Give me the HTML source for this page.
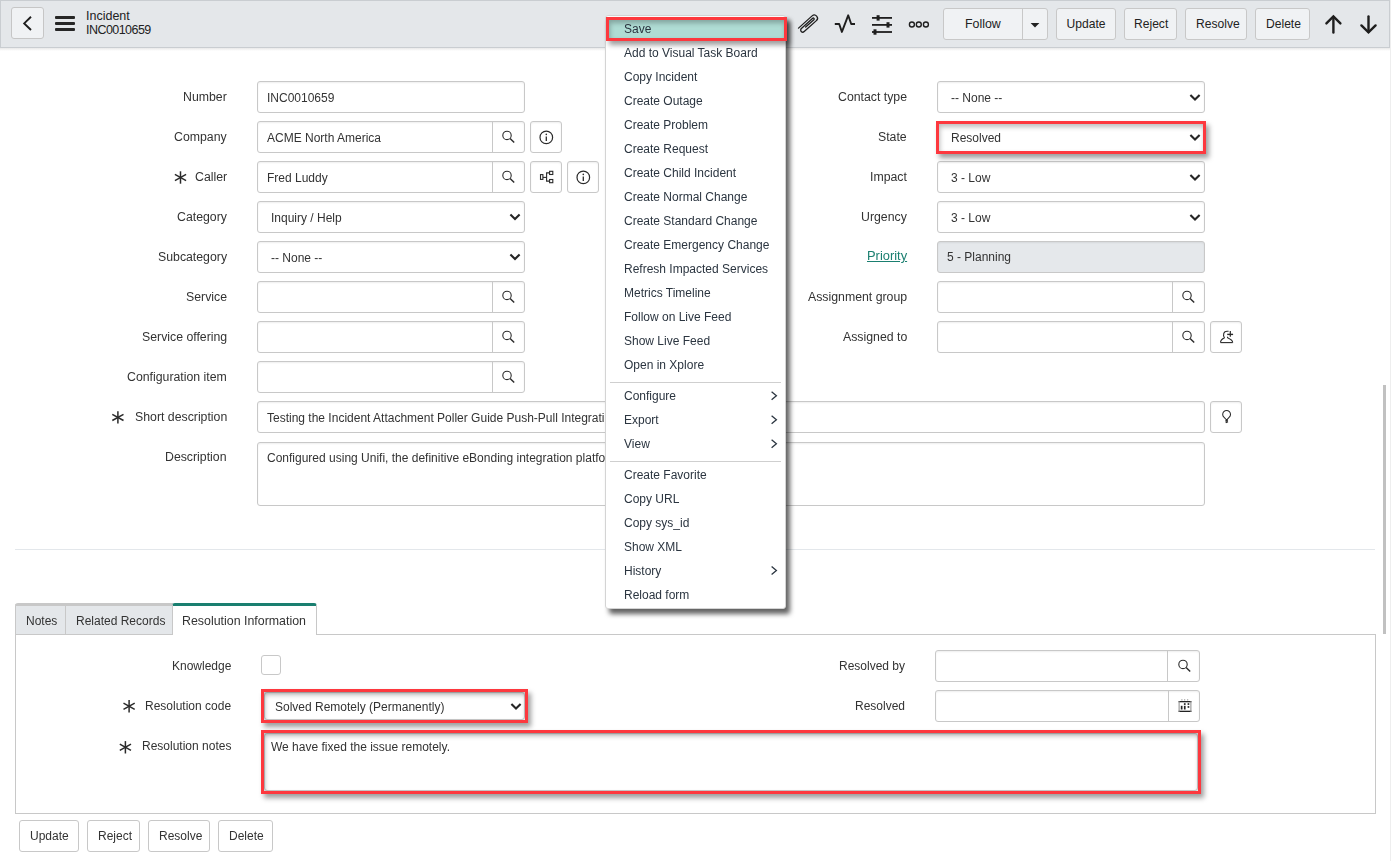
<!DOCTYPE html>
<html><head><meta charset="utf-8"><title>Incident INC0010659</title>
<style>
html,body{margin:0;padding:0;}
body{width:1391px;height:861px;overflow:hidden;position:relative;background:#fff;font-family:"Liberation Sans",sans-serif;font-size:12px;}
.a{position:absolute;display:block;}
.t{position:absolute;white-space:nowrap;line-height:16px;font-size:12px;will-change:transform;}
.t.h{will-change:auto;}
</style></head><body>
<div class="a" style="left:0px;top:0px;width:1390px;height:48px;background:#e4e7ea;border:1px solid #c9cdd1;box-sizing:border-box;"></div>
<div class="a" style="left:0px;top:48px;width:1390px;height:3px;background:linear-gradient(#e9e9e9,#fff);"></div>
<div class="a" style="left:11px;top:7px;width:33px;height:32px;background:#f0f2f4;border:1px solid #c6c6c6;border-radius:3px;box-sizing:border-box;"></div>
<svg class="a" style="left:20px;top:14px;" width="16" height="20" viewBox="20 14 16 20"><polyline points="31,16.8 24.2,23.4 31,30" fill="none" stroke="#1e1e1e" stroke-width="1.9"/></svg>
<div class="a" style="left:55px;top:16px;width:20px;height:3px;background:#262626;border-radius:1px;"></div>
<div class="a" style="left:55px;top:22px;width:20px;height:3px;background:#262626;border-radius:1px;"></div>
<div class="a" style="left:55px;top:28px;width:20px;height:3px;background:#262626;border-radius:1px;"></div>
<div class="t h" style="left:86px;top:8.0px;color:#222;font-size:12.5px;">Incident</div>
<div class="t h" style="left:86px;top:21.6px;color:#222;font-size:12.5px;letter-spacing:-0.55px;">INC0010659</div>
<svg class="a" style="left:795px;top:10px;" width="26" height="28" viewBox="795 10 26 28"><path transform="translate(814.25,18.25) rotate(-42)" d="M-18.3,-3.2 L0,-3.2 A3.2,3.2 0 0 1 0,3.2 L-16.4,3.2 A2.1,2.1 0 0 1 -16.4,-1.0 L-1.2,-1.0 A0.9,0.9 0 0 1 -1.2,0.8 L-12.3,0.8" fill="none" stroke="#1e1e1e" stroke-width="1.3" stroke-linecap="round"/></svg>
<svg class="a" style="left:832px;top:10px;" width="26" height="28" viewBox="832 10 26 28"><polyline points="834.8,24 839.2,24 841.9,31.9 848.2,15.3 851.2,24 855,24" fill="none" stroke="#1e1e1e" stroke-width="1.9" stroke-linejoin="round"/></svg>
<svg class="a" style="left:868px;top:10px;" width="28" height="28" viewBox="868 10 28 28"><g stroke="#1e1e1e" stroke-width="1.8"><line x1="872" y1="17.9" x2="892" y2="17.9"/><line x1="872" y1="24.9" x2="892" y2="24.9"/><line x1="872" y1="32" x2="892" y2="32"/></g><g fill="#1e1e1e"><rect x="876.6" y="15.2" width="3" height="5.4"/><rect x="886.5" y="22.2" width="3" height="5.4"/><rect x="873.5" y="29.3" width="3" height="5.4"/></g></svg>
<svg class="a" style="left:905px;top:18px;" width="26" height="14" viewBox="905 18 26 14"><g fill="none" stroke="#1e1e1e" stroke-width="1.35"><circle cx="911.9" cy="24.5" r="2.5"/><circle cx="918.8" cy="24.5" r="2.5"/><circle cx="925.9" cy="24.5" r="2.5"/></g></svg>
<div class="a" style="left:943px;top:8px;width:105px;height:32px;background:#f0f2f4;border:1px solid #c8c8c8;border-radius:3px;box-sizing:border-box;"></div>
<div class="a" style="left:1022px;top:9px;width:1px;height:30px;background:#c8c8c8;"></div>
<div class="t h" style="left:965px;top:15.8px;color:#222;font-size:12.4px;">Follow</div>
<svg class="a" style="left:1028px;top:20px;" width="16" height="10" viewBox="1028 20 16 10"><polygon points="1030.6,23 1039.4,23 1035,27.4" fill="#222"/></svg>
<div class="a" style="left:1056px;top:8px;width:60px;height:32px;background:#f0f2f4;border:1px solid #c8c8c8;border-radius:3px;box-sizing:border-box;"></div>
<div class="t h" style="left:1066.5px;top:16.1px;color:#222;font-size:12.1px;">Update</div>
<div class="a" style="left:1124px;top:8px;width:53px;height:32px;background:#f0f2f4;border:1px solid #c8c8c8;border-radius:3px;box-sizing:border-box;"></div>
<div class="t h" style="left:1134px;top:16.1px;color:#222;font-size:12.1px;">Reject</div>
<div class="a" style="left:1185px;top:8px;width:62px;height:32px;background:#f0f2f4;border:1px solid #c8c8c8;border-radius:3px;box-sizing:border-box;"></div>
<div class="t h" style="left:1196px;top:16.1px;color:#222;font-size:12.1px;">Resolve</div>
<div class="a" style="left:1255px;top:8px;width:55px;height:32px;background:#f0f2f4;border:1px solid #c8c8c8;border-radius:3px;box-sizing:border-box;"></div>
<div class="t h" style="left:1266px;top:16.1px;color:#222;font-size:12.1px;">Delete</div>
<svg class="a" style="left:1320px;top:10px;" width="60" height="28" viewBox="1320 10 60 28"><g fill="none" stroke="#1e1e1e" stroke-width="2.4" stroke-linecap="round"><polyline points="1326.4,23.4 1333.4,16.4 1340.4,23.4"/><line x1="1333.4" y1="17" x2="1333.4" y2="32.6"/><polyline points="1361.4,25.4 1368.5,32.4 1375.6,25.4"/><line x1="1368.5" y1="16.4" x2="1368.5" y2="31.8"/></g></svg>
<div class="t" style="right:1164px;top:88.5px;color:#333;font-size:12.3px;">Number</div>
<div class="t" style="right:1164px;top:128.5px;color:#333;font-size:12.3px;">Company</div>
<div class="t" style="right:1164px;top:168.5px;color:#333;font-size:12.3px;">Caller</div>
<div class="t" style="right:1164px;top:208.5px;color:#333;font-size:12.3px;">Category</div>
<div class="t" style="right:1164px;top:248.5px;color:#333;font-size:12.3px;">Subcategory</div>
<div class="t" style="right:1164px;top:288.5px;color:#333;font-size:12.3px;">Service</div>
<div class="t" style="right:1164px;top:328.5px;color:#333;font-size:12.3px;">Service offering</div>
<div class="t" style="right:1164px;top:368.5px;color:#333;font-size:12.3px;">Configuration item</div>
<div class="t" style="right:1164px;top:408.5px;color:#333;font-size:12.3px;">Short description</div>
<div class="t" style="right:1164px;top:448.5px;color:#333;font-size:12.3px;">Description</div>
<div class="a" style="left:257px;top:81px;width:268px;height:32px;background:#fff;border:1px solid #c8c8c8;border-radius:3px;box-sizing:border-box;box-shadow:inset 0 1px 2px rgba(0,0,0,.07);"></div>
<div class="t" style="left:267px;top:90.1px;color:#333;font-size:12px;">INC0010659</div>
<div class="a" style="left:257px;top:121px;width:268px;height:32px;background:#fff;border:1px solid #c8c8c8;border-radius:3px;box-sizing:border-box;box-shadow:inset 0 1px 2px rgba(0,0,0,.07);"></div>
<div class="a" style="left:492px;top:122px;width:1px;height:30px;background:#c8c8c8;"></div>
<svg class="a" style="left:500px;top:129px;" width="17" height="17" viewBox="500 129 17 17"><g fill="none" stroke="#2a2a2a" stroke-width="1.2"><circle cx="507.0" cy="135.4" r="4.2" stroke-width="1.1"/><line x1="510.1" y1="138.5" x2="514.2" y2="142.6" stroke-width="1.4"/></g></svg>
<div class="t" style="left:267px;top:130.1px;color:#333;font-size:12px;">ACME North America</div>
<div class="a" style="left:257px;top:161px;width:268px;height:32px;background:#fff;border:1px solid #c8c8c8;border-radius:3px;box-sizing:border-box;box-shadow:inset 0 1px 2px rgba(0,0,0,.07);"></div>
<div class="a" style="left:492px;top:162px;width:1px;height:30px;background:#c8c8c8;"></div>
<svg class="a" style="left:500px;top:169px;" width="17" height="17" viewBox="500 169 17 17"><g fill="none" stroke="#2a2a2a" stroke-width="1.2"><circle cx="507.0" cy="175.4" r="4.2" stroke-width="1.1"/><line x1="510.1" y1="178.5" x2="514.2" y2="182.6" stroke-width="1.4"/></g></svg>
<div class="t" style="left:267px;top:170.1px;color:#333;font-size:12px;">Fred Luddy</div>
<div class="a" style="left:257px;top:281px;width:268px;height:32px;background:#fff;border:1px solid #c8c8c8;border-radius:3px;box-sizing:border-box;box-shadow:inset 0 1px 2px rgba(0,0,0,.07);"></div>
<div class="a" style="left:492px;top:282px;width:1px;height:30px;background:#c8c8c8;"></div>
<svg class="a" style="left:500px;top:289px;" width="17" height="17" viewBox="500 289 17 17"><g fill="none" stroke="#2a2a2a" stroke-width="1.2"><circle cx="507.0" cy="295.4" r="4.2" stroke-width="1.1"/><line x1="510.1" y1="298.5" x2="514.2" y2="302.59999999999997" stroke-width="1.4"/></g></svg>
<div class="a" style="left:257px;top:321px;width:268px;height:32px;background:#fff;border:1px solid #c8c8c8;border-radius:3px;box-sizing:border-box;box-shadow:inset 0 1px 2px rgba(0,0,0,.07);"></div>
<div class="a" style="left:492px;top:322px;width:1px;height:30px;background:#c8c8c8;"></div>
<svg class="a" style="left:500px;top:329px;" width="17" height="17" viewBox="500 329 17 17"><g fill="none" stroke="#2a2a2a" stroke-width="1.2"><circle cx="507.0" cy="335.4" r="4.2" stroke-width="1.1"/><line x1="510.1" y1="338.5" x2="514.2" y2="342.59999999999997" stroke-width="1.4"/></g></svg>
<div class="a" style="left:257px;top:361px;width:268px;height:32px;background:#fff;border:1px solid #c8c8c8;border-radius:3px;box-sizing:border-box;box-shadow:inset 0 1px 2px rgba(0,0,0,.07);"></div>
<div class="a" style="left:492px;top:362px;width:1px;height:30px;background:#c8c8c8;"></div>
<svg class="a" style="left:500px;top:369px;" width="17" height="17" viewBox="500 369 17 17"><g fill="none" stroke="#2a2a2a" stroke-width="1.2"><circle cx="507.0" cy="375.4" r="4.2" stroke-width="1.1"/><line x1="510.1" y1="378.5" x2="514.2" y2="382.59999999999997" stroke-width="1.4"/></g></svg>
<div class="a" style="left:530px;top:121px;width:32px;height:32px;background:#fff;border:1px solid #c8c8c8;border-radius:3px;box-sizing:border-box;box-shadow:inset 0 1px 2px rgba(0,0,0,.07);"></div>
<svg class="a" style="left:530px;top:121px;" width="32" height="32" viewBox="530 121 32 32"><circle cx="546.3" cy="137.4" r="6.3" fill="none" stroke="#2a2a2a" stroke-width="1.2"/><circle cx="546.3" cy="134.4" r="0.8" fill="#2a2a2a"/><line x1="546.3" y1="136.6" x2="546.3" y2="141.0" stroke="#2a2a2a" stroke-width="1.3"/></svg>
<div class="a" style="left:530px;top:161px;width:32px;height:32px;background:#fff;border:1px solid #c8c8c8;border-radius:3px;box-sizing:border-box;box-shadow:inset 0 1px 2px rgba(0,0,0,.07);"></div>
<svg class="a" style="left:530px;top:161px;" width="32" height="32" viewBox="530 161 32 32"><g fill="none" stroke="#2a2a2a" stroke-width="1.1"><rect x="540.5" y="174.6" width="2.4" height="4.8"/><rect x="549.6" y="171.3" width="3.2" height="3.2"/><rect x="549.6" y="179.5" width="3.2" height="3.2"/><polyline points="543,177.4 546.6,177.4"/><polyline points="549.6,172.9 546.6,172.9 546.6,181.1 549.6,181.1"/></g></svg>
<div class="a" style="left:567px;top:161px;width:32px;height:32px;background:#fff;border:1px solid #c8c8c8;border-radius:3px;box-sizing:border-box;box-shadow:inset 0 1px 2px rgba(0,0,0,.07);"></div>
<svg class="a" style="left:567px;top:161px;" width="32" height="32" viewBox="567 161 32 32"><circle cx="583.3" cy="177.4" r="6.3" fill="none" stroke="#2a2a2a" stroke-width="1.2"/><circle cx="583.3" cy="174.4" r="0.8" fill="#2a2a2a"/><line x1="583.3" y1="176.6" x2="583.3" y2="181.0" stroke="#2a2a2a" stroke-width="1.3"/></svg>
<svg class="a" style="left:172px;top:169px;" width="17" height="17" viewBox="172 169 17 17"><g stroke="#2a2a2a" stroke-width="1.5"><line x1="180.5" y1="171.3" x2="180.5" y2="183.7"/><line x1="174.9" y1="174.4" x2="186.1" y2="180.6"/><line x1="174.9" y1="180.6" x2="186.1" y2="174.4"/></g></svg>
<div class="a" style="left:257px;top:201px;width:268px;height:32px;background:#fff;border:1px solid #c8c8c8;border-radius:3px;box-sizing:border-box;box-shadow:inset 0 1px 2px rgba(0,0,0,.07);"></div>
<div class="t" style="left:271px;top:210.1px;color:#333;font-size:12px;">Inquiry / Help</div>
<svg class="a" style="left:508px;top:211px;" width="14" height="12" viewBox="508 211 14 12"><polyline points="510.4,214.4 515,219 519.6,214.4" fill="none" stroke="#262626" stroke-width="2.1"/></svg>
<div class="a" style="left:257px;top:241px;width:268px;height:32px;background:#fff;border:1px solid #c8c8c8;border-radius:3px;box-sizing:border-box;box-shadow:inset 0 1px 2px rgba(0,0,0,.07);"></div>
<div class="t" style="left:271px;top:250.1px;color:#333;font-size:12px;">-- None --</div>
<svg class="a" style="left:508px;top:251px;" width="14" height="12" viewBox="508 251 14 12"><polyline points="510.4,254.4 515,259 519.6,254.4" fill="none" stroke="#262626" stroke-width="2.1"/></svg>
<div class="a" style="left:257px;top:401px;width:948px;height:32px;background:#fff;border:1px solid #c8c8c8;border-radius:3px;box-sizing:border-box;box-shadow:inset 0 1px 2px rgba(0,0,0,.07);"></div>
<div class="t" style="left:267px;top:410.0px;color:#333;font-size:12px;">Testing the Incident Attachment Poller Guide Push-Pull Integration</div>
<svg class="a" style="left:109px;top:409px;" width="17" height="17" viewBox="109 409 17 17"><g stroke="#2a2a2a" stroke-width="1.5"><line x1="117.9" y1="411.2" x2="117.9" y2="423.59999999999997"/><line x1="112.30000000000001" y1="414.29999999999995" x2="123.5" y2="420.5"/><line x1="112.30000000000001" y1="420.5" x2="123.5" y2="414.29999999999995"/></g></svg>
<div class="a" style="left:1210px;top:401px;width:32px;height:32px;background:#fff;border:1px solid #c8c8c8;border-radius:3px;box-sizing:border-box;box-shadow:inset 0 1px 2px rgba(0,0,0,.07);"></div>
<svg class="a" style="left:1210px;top:401px;" width="32" height="32" viewBox="1210 401 32 32"><g fill="none" stroke="#2a2a2a" stroke-width="1.1"><path d="M1226.6,420 L1223.9,417.2 A3.9,3.9 0 1 1 1229.3,417.2 Z" stroke-width="1.05"/><path d="M1225.4,421.1 L1227.9,419.9 M1225.7,422.7 L1228,421.6" stroke-width="1.3"/></g></svg>
<div class="a" style="left:257px;top:442px;width:948px;height:64px;background:#fff;border:1px solid #c8c8c8;border-radius:3px;box-sizing:border-box;box-shadow:inset 0 1px 2px rgba(0,0,0,.07);"></div>
<div class="t" style="left:267px;top:450.0px;color:#333;font-size:12px;">Configured using Unifi, the definitive eBonding integration platform for ServiceNow</div>
<div class="t" style="right:484px;top:88.5px;color:#333;font-size:12.3px;">Contact type</div>
<div class="t" style="right:484px;top:128.5px;color:#333;font-size:12.3px;">State</div>
<div class="t" style="right:484px;top:168.5px;color:#333;font-size:12.3px;">Impact</div>
<div class="t" style="right:484px;top:208.5px;color:#333;font-size:12.3px;">Urgency</div>
<div class="t" style="right:484px;top:288.5px;color:#333;font-size:12.3px;">Assignment group</div>
<div class="t" style="right:484px;top:328.5px;color:#333;font-size:12.3px;">Assigned to</div>
<div class="t" style="right:484px;top:248.0px;color:#1a7f70;font-size:12.9px;text-decoration:underline;">Priority</div>
<div class="a" style="left:937px;top:81px;width:268px;height:32px;background:#fff;border:1px solid #c8c8c8;border-radius:3px;box-sizing:border-box;box-shadow:inset 0 1px 2px rgba(0,0,0,.07);"></div>
<div class="t" style="left:951px;top:90.0px;color:#333;font-size:12px;">-- None --</div>
<svg class="a" style="left:1188px;top:91px;" width="14" height="13" viewBox="1188 91 14 13"><polyline points="1190.4,94.9 1195,99.5 1199.6,94.9" fill="none" stroke="#262626" stroke-width="2.1"/></svg>
<div class="a" style="left:937px;top:121px;width:268px;height:32px;background:#fff;border:1px solid #c8c8c8;border-radius:3px;box-sizing:border-box;box-shadow:inset 0 1px 2px rgba(0,0,0,.07);"></div>
<div class="t" style="left:951px;top:130.0px;color:#333;font-size:12px;">Resolved</div>
<svg class="a" style="left:1188px;top:131px;" width="14" height="13" viewBox="1188 131 14 13"><polyline points="1190.4,134.9 1195,139.5 1199.6,134.9" fill="none" stroke="#262626" stroke-width="2.1"/></svg>
<div class="a" style="left:937px;top:161px;width:268px;height:32px;background:#fff;border:1px solid #c8c8c8;border-radius:3px;box-sizing:border-box;box-shadow:inset 0 1px 2px rgba(0,0,0,.07);"></div>
<div class="t" style="left:951px;top:170.0px;color:#333;font-size:12px;">3 - Low</div>
<svg class="a" style="left:1188px;top:171px;" width="14" height="13" viewBox="1188 171 14 13"><polyline points="1190.4,174.9 1195,179.5 1199.6,174.9" fill="none" stroke="#262626" stroke-width="2.1"/></svg>
<div class="a" style="left:937px;top:201px;width:268px;height:32px;background:#fff;border:1px solid #c8c8c8;border-radius:3px;box-sizing:border-box;box-shadow:inset 0 1px 2px rgba(0,0,0,.07);"></div>
<div class="t" style="left:951px;top:210.0px;color:#333;font-size:12px;">3 - Low</div>
<svg class="a" style="left:1188px;top:211px;" width="14" height="13" viewBox="1188 211 14 13"><polyline points="1190.4,214.9 1195,219.5 1199.6,214.9" fill="none" stroke="#262626" stroke-width="2.1"/></svg>
<div class="a" style="left:937px;top:241px;width:268px;height:32px;background:#e5e8eb;border:1px solid #c8c8c8;border-radius:3px;box-sizing:border-box;box-shadow:inset 0 1px 2px rgba(0,0,0,.07);"></div>
<div class="t" style="left:947px;top:249.2px;color:#333;font-size:12px;">5 - Planning</div>
<div class="a" style="left:937px;top:281px;width:268px;height:32px;background:#fff;border:1px solid #c8c8c8;border-radius:3px;box-sizing:border-box;box-shadow:inset 0 1px 2px rgba(0,0,0,.07);"></div>
<div class="a" style="left:1172px;top:282px;width:1px;height:30px;background:#c8c8c8;"></div>
<svg class="a" style="left:1180px;top:289px;" width="17" height="17" viewBox="1180 289 17 17"><g fill="none" stroke="#2a2a2a" stroke-width="1.2"><circle cx="1187.0" cy="295.4" r="4.2" stroke-width="1.1"/><line x1="1190.1" y1="298.5" x2="1194.1999999999998" y2="302.59999999999997" stroke-width="1.4"/></g></svg>
<div class="a" style="left:937px;top:321px;width:268px;height:32px;background:#fff;border:1px solid #c8c8c8;border-radius:3px;box-sizing:border-box;box-shadow:inset 0 1px 2px rgba(0,0,0,.07);"></div>
<div class="a" style="left:1172px;top:322px;width:1px;height:30px;background:#c8c8c8;"></div>
<svg class="a" style="left:1180px;top:329px;" width="17" height="17" viewBox="1180 329 17 17"><g fill="none" stroke="#2a2a2a" stroke-width="1.2"><circle cx="1187.0" cy="335.4" r="4.2" stroke-width="1.1"/><line x1="1190.1" y1="338.5" x2="1194.1999999999998" y2="342.59999999999997" stroke-width="1.4"/></g></svg>
<div class="a" style="left:1210px;top:321px;width:32px;height:32px;background:#fff;border:1px solid #c8c8c8;border-radius:3px;box-sizing:border-box;box-shadow:inset 0 1px 2px rgba(0,0,0,.07);"></div>
<svg class="a" style="left:1210px;top:321px;" width="32" height="32" viewBox="1210 321 32 32"><g fill="none" stroke="#2a2a2a" stroke-width="1.1"><path d="M1220.5,342.6 L1232.7,342.6"/><path d="M1224.6,337.8 C1222,339 1220.5,340 1220.5,342.6"/><path d="M1227.6,336.8 C1227.3,337.4 1227.5,337.8 1228,338.1 C1230.5,339.2 1232.7,340.2 1232.7,342.6"/><path d="M1224.6,337.8 C1223.6,336.4 1223.3,334.6 1223.8,333.2 C1224.3,331.8 1225.6,331.3 1227,331.3 L1228.6,331.3"/><line x1="1227.2" y1="334.4" x2="1233.1" y2="334.4" stroke-width="1.4"/><line x1="1230.3" y1="331.1" x2="1230.3" y2="336.7" stroke-width="1.2"/></g></svg>
<div class="a" style="left:936px;top:121px;width:270px;height:33px;border:3px solid #fd383e;box-sizing:border-box;box-shadow:3px 4px 5px rgba(0,0,0,.38), inset 1px 3px 5px rgba(0,0,0,.26);"></div>
<div class="a" style="left:15px;top:549px;width:1360px;height:1px;background:#e3e7eb;"></div>
<div class="a" style="left:15px;top:603px;width:158px;height:31px;background:#e4e7ea;border-top:3px solid #c8c8c8;border-left:1px solid #c8c8c8;box-sizing:border-box;border-radius:3px 0 0 0;"></div>
<div class="a" style="left:65px;top:606px;width:1px;height:28px;background:#c8c8c8;"></div>
<div class="a" style="left:172px;top:606px;width:1px;height:28px;background:#c8c8c8;"></div>
<div class="a" style="left:172px;top:603px;width:145px;height:32px;background:#fff;border-top:3px solid #1a7f70;border-right:1px solid #c8c8c8;border-left:1px solid #c8c8c8;box-sizing:border-box;border-radius:3px 3px 0 0;"></div>
<div class="t" style="left:25.5px;top:613.1px;color:#333;font-size:12px;">Notes</div>
<div class="t" style="left:75.5px;top:613.1px;color:#333;font-size:12px;">Related Records</div>
<div class="t" style="left:182px;top:612.7px;color:#333;font-size:12.4px;">Resolution Information</div>
<div class="a" style="left:15px;top:634px;width:1361px;height:180px;border:1px solid #c8c8c8;box-sizing:border-box;background:#fff;"></div>
<div class="a" style="left:173px;top:634px;width:143px;height:1px;background:#fff;"></div>
<div class="t" style="right:1160px;top:657.8px;color:#333;font-size:12px;">Knowledge</div>
<div class="a" style="left:261px;top:655px;width:20px;height:20px;border:1px solid #c8c8c8;border-radius:3px;box-sizing:border-box;background:#fff;"></div>
<div class="t" style="right:1160px;top:697.5px;color:#333;font-size:12px;">Resolution code</div>
<svg class="a" style="left:121px;top:698px;" width="17" height="17" viewBox="121 698 17 17"><g stroke="#2a2a2a" stroke-width="1.5"><line x1="129.1" y1="700.0999999999999" x2="129.1" y2="712.5"/><line x1="123.5" y1="703.1999999999999" x2="134.7" y2="709.4"/><line x1="123.5" y1="709.4" x2="134.7" y2="703.1999999999999"/></g></svg>
<div class="t" style="right:1160px;top:737.6px;color:#333;font-size:12px;">Resolution notes</div>
<svg class="a" style="left:117px;top:739px;" width="17" height="17" viewBox="117 739 17 17"><g stroke="#2a2a2a" stroke-width="1.5"><line x1="125.4" y1="741.0999999999999" x2="125.4" y2="753.5"/><line x1="119.80000000000001" y1="744.1999999999999" x2="131.0" y2="750.4"/><line x1="119.80000000000001" y1="750.4" x2="131.0" y2="744.1999999999999"/></g></svg>
<div class="a" style="left:264px;top:692px;width:261px;height:28px;background:#fff;border:1px solid #c8c8c8;border-radius:3px;box-sizing:border-box;box-shadow:inset 0 1px 2px rgba(0,0,0,.07);"></div>
<div class="t" style="left:275px;top:698.8px;color:#333;font-size:12px;">Solved Remotely (Permanently)</div>
<svg class="a" style="left:509px;top:700px;" width="14" height="13" viewBox="509 700 14 13"><polyline points="511.4,703.9 516,708.5 520.6,703.9" fill="none" stroke="#262626" stroke-width="2.1"/></svg>
<div class="a" style="left:261px;top:689px;width:267px;height:34px;border:3px solid #fd383e;box-sizing:border-box;box-shadow:3px 4px 5px rgba(0,0,0,.38), inset 1px 3px 5px rgba(0,0,0,.26);"></div>
<div class="a" style="left:264px;top:733px;width:934px;height:58px;background:#fff;border:1px solid #c8c8c8;border-radius:3px;box-sizing:border-box;box-shadow:inset 0 1px 2px rgba(0,0,0,.07);"></div>
<div class="t" style="left:271px;top:739.4px;color:#333;font-size:12px;">We have fixed the issue remotely.</div>
<div class="a" style="left:261px;top:730px;width:940px;height:64px;border:3px solid #fd383e;box-sizing:border-box;box-shadow:3px 4px 5px rgba(0,0,0,.38), inset 1px 3px 5px rgba(0,0,0,.26);"></div>
<div class="t" style="right:486px;top:658.0px;color:#333;font-size:12px;">Resolved by</div>
<div class="a" style="left:935px;top:650px;width:265px;height:32px;background:#fff;border:1px solid #c8c8c8;border-radius:3px;box-sizing:border-box;box-shadow:inset 0 1px 2px rgba(0,0,0,.07);"></div>
<div class="a" style="left:1167px;top:651px;width:1px;height:30px;background:#c8c8c8;"></div>
<svg class="a" style="left:1176px;top:658px;" width="17" height="17" viewBox="1176 658 17 17"><g fill="none" stroke="#2a2a2a" stroke-width="1.2"><circle cx="1183.0" cy="664.4" r="4.2" stroke-width="1.1"/><line x1="1186.1" y1="667.5" x2="1190.1999999999998" y2="671.6" stroke-width="1.4"/></g></svg>
<div class="t" style="right:486px;top:697.6px;color:#333;font-size:12px;">Resolved</div>
<div class="a" style="left:935px;top:690px;width:265px;height:32px;background:#fff;border:1px solid #c8c8c8;border-radius:3px;box-sizing:border-box;box-shadow:inset 0 1px 2px rgba(0,0,0,.07);"></div>
<div class="a" style="left:1168px;top:691px;width:1px;height:30px;background:#c8c8c8;"></div>
<svg class="a" style="left:1176px;top:696px;" width="18" height="18" viewBox="1176 696 18 18"><g fill="#222"><rect x="1178.6" y="701" width="12.8" height="1.3"/><rect x="1178.6" y="710.7" width="12.8" height="1.3"/><rect x="1178.6" y="701" width="1" height="11" fill="#8a8a8a"/><rect x="1190.4" y="701" width="1" height="11" fill="#8a8a8a"/><rect x="1181.4" y="699" width="1" height="1.6" fill="#aaa"/><rect x="1184.2" y="699" width="1" height="1.6" fill="#aaa"/><rect x="1187.2" y="699" width="1" height="1.6" fill="#aaa"/><rect x="1183.9" y="703.2" width="1.7" height="1.7"/><rect x="1187.6" y="703.2" width="1.7" height="1.7"/><rect x="1187.6" y="706.1" width="1.7" height="1.7"/><rect x="1180.8" y="705.8" width="1.7" height="3.7"/><rect x="1183.9" y="705.8" width="1.7" height="3.7"/></g></svg>
<div class="a" style="left:19px;top:820px;width:60px;height:32px;background:#fff;border:1px solid #c8c8c8;border-radius:3px;box-sizing:border-box;"></div>
<div class="t" style="left:29.5px;top:828.1px;color:#333;font-size:12px;">Update</div>
<div class="a" style="left:87px;top:820px;width:53px;height:32px;background:#fff;border:1px solid #c8c8c8;border-radius:3px;box-sizing:border-box;"></div>
<div class="t" style="left:97.5px;top:828.1px;color:#333;font-size:12px;">Reject</div>
<div class="a" style="left:148px;top:820px;width:62px;height:32px;background:#fff;border:1px solid #c8c8c8;border-radius:3px;box-sizing:border-box;"></div>
<div class="t" style="left:158.5px;top:828.1px;color:#333;font-size:12px;">Resolve</div>
<div class="a" style="left:218px;top:820px;width:55px;height:32px;background:#fff;border:1px solid #c8c8c8;border-radius:3px;box-sizing:border-box;"></div>
<div class="t" style="left:228.5px;top:828.1px;color:#333;font-size:12px;">Delete</div>
<div class="a" style="left:1383px;top:385px;width:3px;height:249px;background:#c1c1c1;"></div>
<div class="a" style="left:1390px;top:0px;width:1px;height:861px;background:#eeeeee;"></div>
<div class="a" style="left:605px;top:15px;width:181px;height:594px;background:#fff;border:1px solid #d4d4d4;box-sizing:border-box;border-radius:3px;box-shadow:4px 5px 5px rgba(0,0,0,.62);"></div>
<div class="a" style="left:606px;top:17px;width:181px;height:24px;background:#afdcd4;"></div>
<div class="t h" style="left:624px;top:20.5px;color:#2b3540;font-size:12px;">Save</div>
<div class="t h" style="left:624px;top:44.5px;color:#2b3540;font-size:12px;">Add to Visual Task Board</div>
<div class="t h" style="left:624px;top:68.5px;color:#2b3540;font-size:12px;">Copy Incident</div>
<div class="t h" style="left:624px;top:92.5px;color:#2b3540;font-size:12px;">Create Outage</div>
<div class="t h" style="left:624px;top:116.5px;color:#2b3540;font-size:12px;">Create Problem</div>
<div class="t h" style="left:624px;top:140.5px;color:#2b3540;font-size:12px;">Create Request</div>
<div class="t h" style="left:624px;top:164.5px;color:#2b3540;font-size:12px;">Create Child Incident</div>
<div class="t h" style="left:624px;top:188.5px;color:#2b3540;font-size:12px;">Create Normal Change</div>
<div class="t h" style="left:624px;top:212.5px;color:#2b3540;font-size:12px;">Create Standard Change</div>
<div class="t h" style="left:624px;top:236.5px;color:#2b3540;font-size:12px;">Create Emergency Change</div>
<div class="t h" style="left:624px;top:260.5px;color:#2b3540;font-size:12px;">Refresh Impacted Services</div>
<div class="t h" style="left:624px;top:284.5px;color:#2b3540;font-size:12px;">Metrics Timeline</div>
<div class="t h" style="left:624px;top:308.5px;color:#2b3540;font-size:12px;">Follow on Live Feed</div>
<div class="t h" style="left:624px;top:332.5px;color:#2b3540;font-size:12px;">Show Live Feed</div>
<div class="t h" style="left:624px;top:356.5px;color:#2b3540;font-size:12px;">Open in Xplore</div>
<div class="a" style="left:610px;top:382px;width:171px;height:1px;background:#cfcfcf;"></div>
<div class="a" style="left:610px;top:461px;width:171px;height:1px;background:#cfcfcf;"></div>
<div class="t h" style="left:624px;top:388.0px;color:#2b3540;font-size:12px;">Configure</div>
<svg class="a" style="left:768px;top:389px;" width="12" height="13" viewBox="768 389 12 13"><polyline points="771.6,391.8 776.4,395.8 771.6,399.8" fill="none" stroke="#2b3540" stroke-width="1.3"/></svg>
<div class="t h" style="left:624px;top:412.0px;color:#2b3540;font-size:12px;">Export</div>
<svg class="a" style="left:768px;top:413px;" width="12" height="13" viewBox="768 413 12 13"><polyline points="771.6,415.8 776.4,419.8 771.6,423.8" fill="none" stroke="#2b3540" stroke-width="1.3"/></svg>
<div class="t h" style="left:624px;top:436.0px;color:#2b3540;font-size:12px;">View</div>
<svg class="a" style="left:768px;top:437px;" width="12" height="13" viewBox="768 437 12 13"><polyline points="771.6,439.8 776.4,443.8 771.6,447.8" fill="none" stroke="#2b3540" stroke-width="1.3"/></svg>
<div class="t h" style="left:624px;top:466.6px;color:#2b3540;font-size:12px;">Create Favorite</div>
<div class="t h" style="left:624px;top:490.6px;color:#2b3540;font-size:12px;">Copy URL</div>
<div class="t h" style="left:624px;top:514.6px;color:#2b3540;font-size:12px;">Copy sys_id</div>
<div class="t h" style="left:624px;top:538.6px;color:#2b3540;font-size:12px;">Show XML</div>
<div class="t h" style="left:624px;top:562.6px;color:#2b3540;font-size:12px;">History</div>
<svg class="a" style="left:768px;top:564px;" width="12" height="13" viewBox="768 564 12 13"><polyline points="771.6,566.4 776.4,570.4 771.6,574.4" fill="none" stroke="#2b3540" stroke-width="1.3"/></svg>
<div class="t h" style="left:624px;top:586.6px;color:#2b3540;font-size:12px;">Reload form</div>
<div class="a" style="left:606px;top:17px;width:181px;height:24px;border:3px solid #fd383e;box-sizing:border-box;box-shadow:3px 4px 5px rgba(0,0,0,.38), inset 1px 3px 5px rgba(0,0,0,.26);"></div>
</body></html>
